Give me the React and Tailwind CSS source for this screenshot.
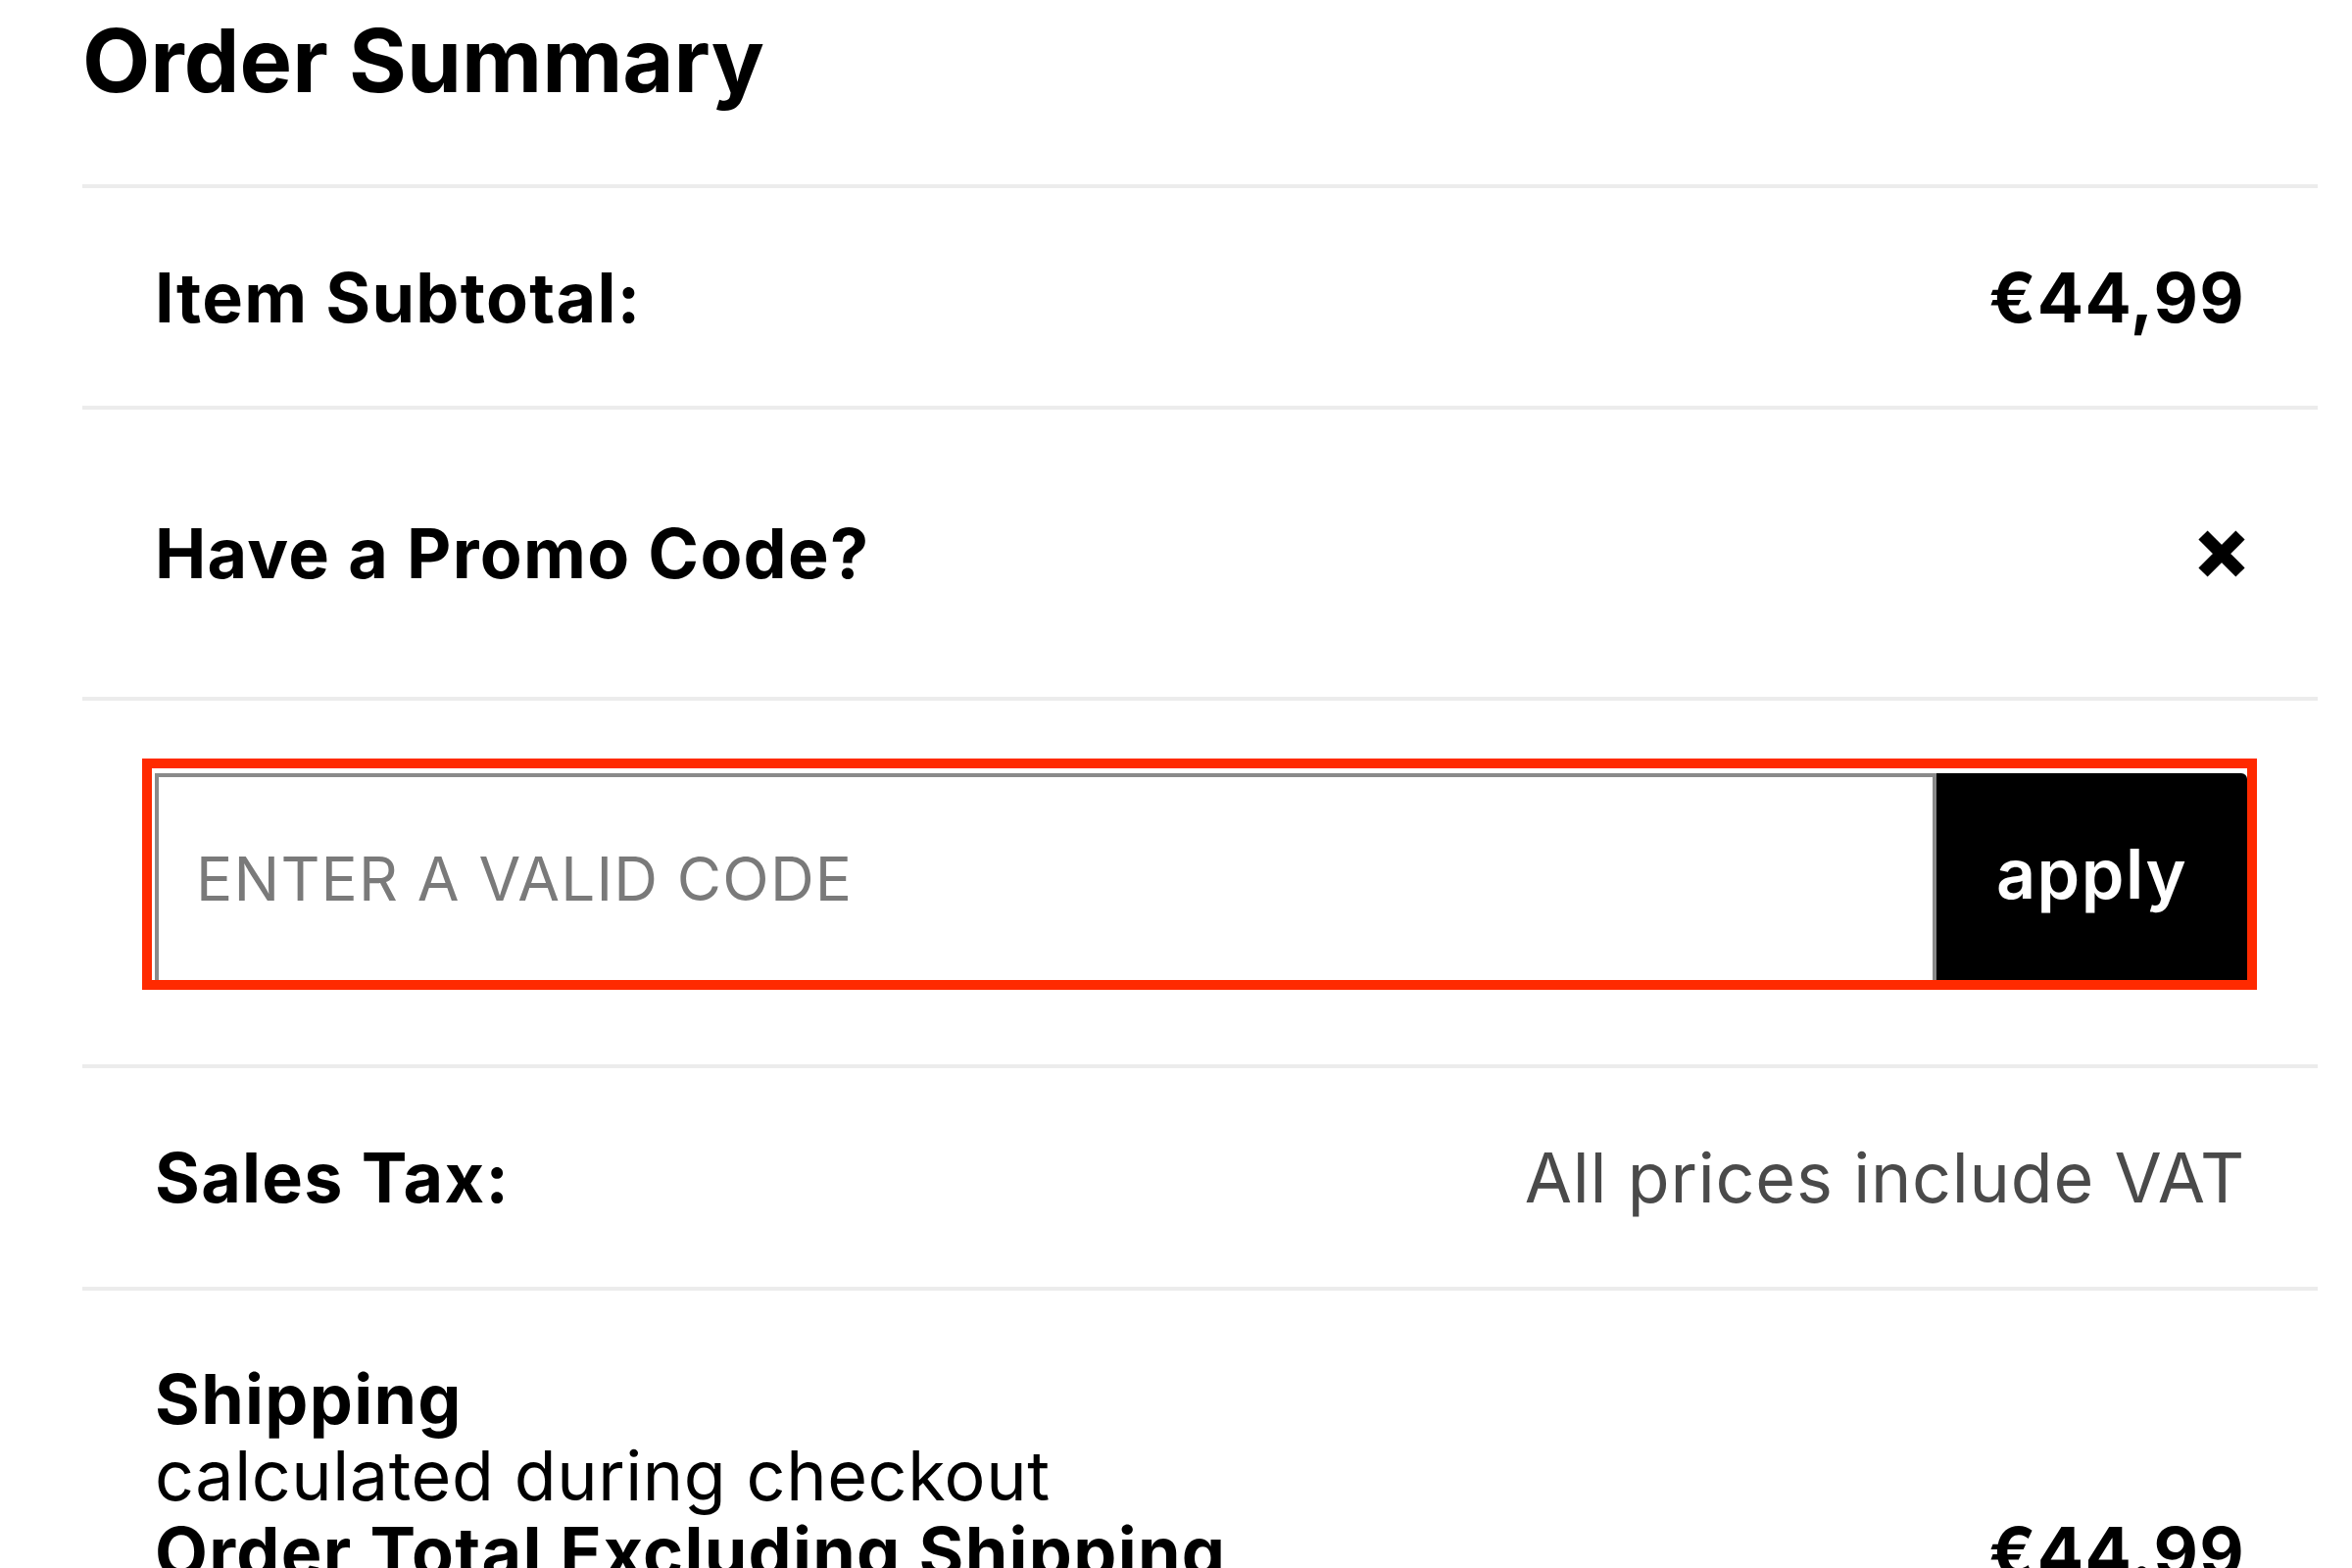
import { useState } from "react";

const font = { fontFamily: "Inter, 'Noto Sans', sans-serif" };

function Row({ children, className = "" }) {
  return (
    <div className={`border-t-4 border-[#ececec] flex items-center justify-between px-[74px] ${className}`}>
      {children}
    </div>
  );
}

function CloseIcon() {
  return (
    <svg width="56" height="56" viewBox="0 0 56 56" className="block -mr-[4px]">
      <path d="M9 9 L47 47 M47 9 L9 47" stroke="#000" strokeWidth="13" strokeLinecap="butt" />
    </svg>
  );
}

export default function App() {
  const [code, setCode] = useState("");

  return (
    <div className="w-[2400px] h-[1600px] bg-white overflow-hidden pl-[84px] pr-[35px] text-black" style={font}>
      {/* Title */}
      <h1 className="h-[188px] pt-[8px] text-[90px] font-bold leading-[1.2]">Order Summary</h1>

      {/* Subtotal */}
      <Row className="h-[226px]">
        <span className="text-[70px] font-bold tracking-[1.3px]">Item Subtotal:</span>
        <span className="text-[70px] font-bold tracking-[1.3px]">€44,99</span>
      </Row>

      {/* Promo code toggle */}
      <Row className="h-[297px]">
        <span className="text-[70px] font-bold tracking-[1.3px]">Have a Promo Code?</span>
        <CloseIcon />
      </Row>

      {/* Promo input */}
      <div className="border-t-4 border-[#ececec] h-[375px] pt-[59px] pl-[61px] pr-[62px]">
        <div className="h-[236px] border-[10px] border-[#ff2a00] bg-white flex pt-[5px] pl-[3px]">
          <input
            value={code}
            onChange={(e) => setCode(e.target.value)}
            placeholder="ENTER A VALID CODE"
            className="flex-1 min-w-0 h-full border-t-[4px] border-l-[4px] border-r-[4px] border-[#8a8a8a] pl-[38px] text-[62px] tracking-[1.2px] text-[#7a7a7a] placeholder:text-[#7a7a7a] outline-none"
            style={font}
          />
          <button className="w-[317px] h-full bg-black text-white text-[70px] font-semibold tracking-[1.5px] rounded-tr-[6px] pb-[6px]">
            apply
          </button>
        </div>
      </div>

      {/* Sales tax */}
      <Row className="h-[227px]">
        <span className="text-[70px] font-bold tracking-[1.3px]">Sales Tax:</span>
        <span className="text-[70px] tracking-[0.8px] text-[#4a4a4a]">All prices include VAT</span>
      </Row>

      {/* Shipping + total */}
      <div className="border-t-4 border-[#ececec] px-[74px] pt-[72px] text-[70px] leading-[78px]">
        <div className="font-bold tracking-[1.3px]">Shipping</div>
        <div className="tracking-[0.6px]">calculated during checkout</div>
        <div className="flex justify-between font-bold tracking-[1.3px]">
          <span>Order Total Excluding Shipping</span>
          <span>€44.99</span>
        </div>
      </div>
    </div>
  );
}
